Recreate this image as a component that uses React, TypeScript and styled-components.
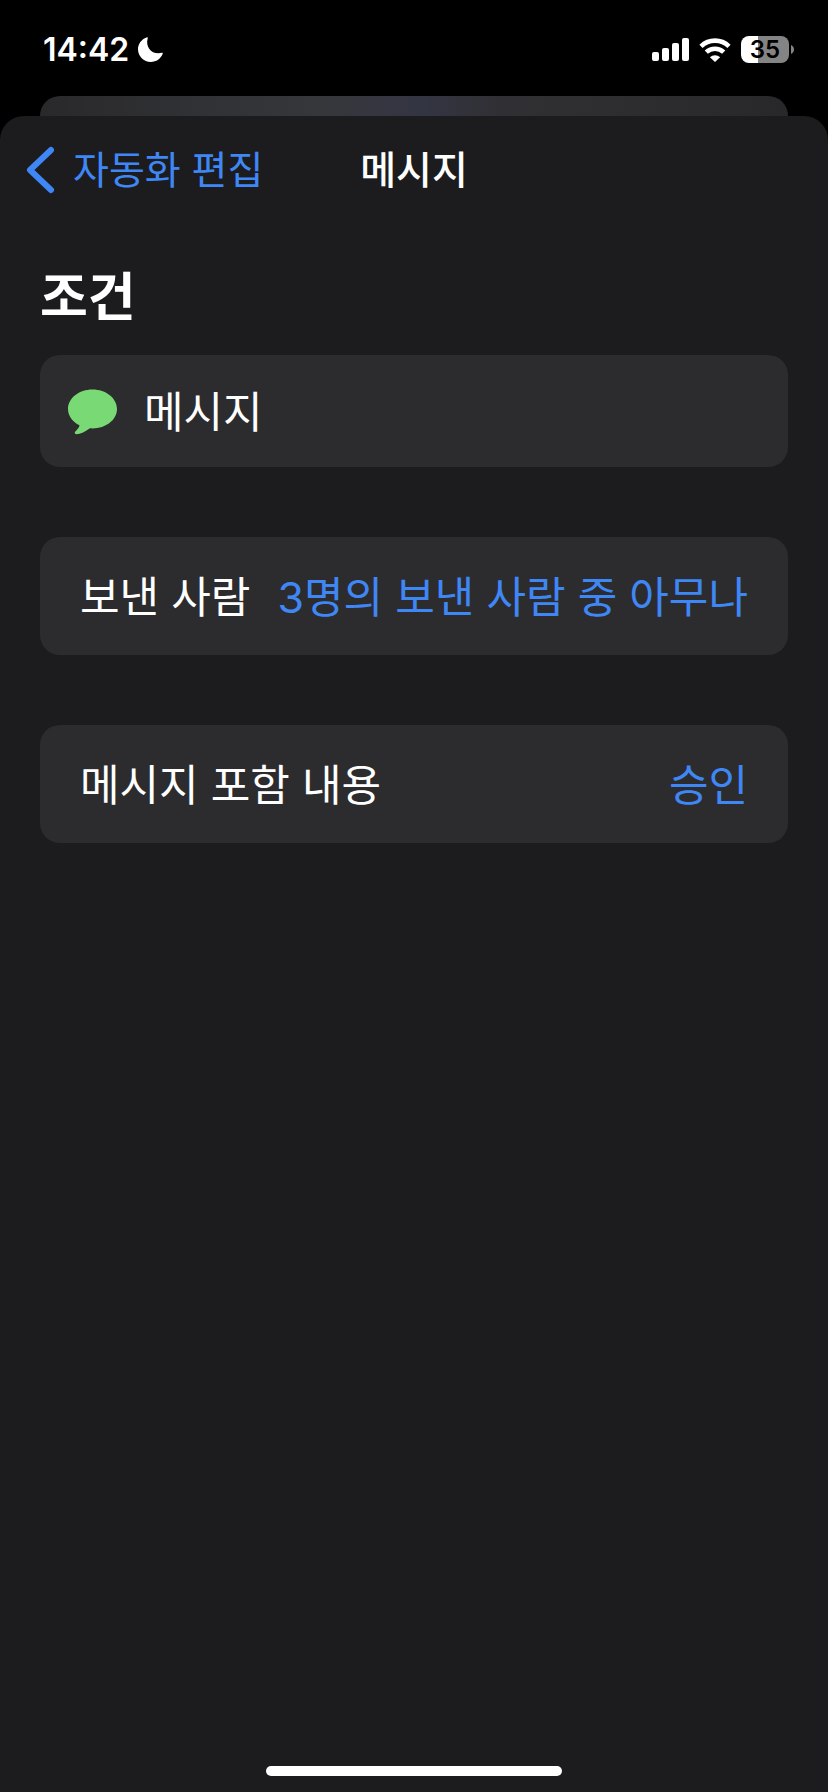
import React from "react";
import styled, { createGlobalStyle } from "styled-components";

const colors = {
  sheet: "#1c1c1e",
  card: "#2c2c2e",
  accent: "#3f87f5",
  green: "#78d975",
  gray: "#848484",
};

const GlobalStyle = createGlobalStyle`
  *, *::before, *::after { box-sizing: border-box; }
  body {
    margin: 0;
    background: #000;
    color: #fff;
    font-family: Inter, "Noto Sans CJK KR", sans-serif;
  }
  button {
    margin: 0;
    padding: 0;
    border: 0;
    background: none;
    font: inherit;
    cursor: pointer;
  }
`;

const Screen = styled.div`
  display: flex;
  flex-direction: column;
  min-height: 100vh;
`;

const StatusBar = styled.header`
  display: flex;
  align-items: center;
  justify-content: space-between;
  height: 96px;
  padding: 3px 34px 0 43px;
`;

const StatusGroup = styled.div<{ $gap: number }>`
  display: flex;
  align-items: center;
  gap: ${(p) => p.$gap}px;
`;

const Time = styled.time`
  font-size: 32px;
  font-weight: 600;
  line-height: 40px;
`;

const Battery = styled.div`
  display: flex;
  align-items: center;
  gap: 2px;
`;

const BatteryBody = styled.div<{ $level: number }>`
  width: 48px;
  border-radius: 8px;
  background: linear-gradient(
    to right,
    #fff ${(p) => p.$level}%,
    ${colors.gray} ${(p) => p.$level}%
  );
  color: #000;
  font-size: 24px;
  font-weight: 600;
  line-height: 27px;
  text-align: center;
`;

const SheetBehind = styled.div`
  height: 20px;
  margin: 0 40px;
  border-radius: 20px 20px 0 0;
  background: linear-gradient(
    to right,
    #29292b 0%,
    #303134 20%,
    #36373b 38%,
    #343543 51%,
    #302f33 62%,
    #2e2e30 75%,
    #28282a 100%
  );
`;

const Sheet = styled.main`
  display: flex;
  flex: 1;
  flex-direction: column;
  border-radius: 24px 24px 0 0;
  background: ${colors.sheet};
`;

const NavBar = styled.nav`
  display: grid;
  grid-template-columns: 1fr auto 1fr;
  align-items: center;
  height: 108px;
  padding: 0 26px;
`;

const BackButton = styled.button`
  display: flex;
  align-items: center;
  justify-self: start;
  gap: 18px;
  color: ${colors.accent};
  font-size: 39px;
  line-height: 56px;
`;

const Title = styled.h1`
  margin: 0;
  font-size: 39px;
  font-weight: 500;
  line-height: 56px;
`;

const Content = styled.section`
  display: flex;
  flex-direction: column;
  padding: 34px 40px 0;
`;

const Heading = styled.h2`
  margin: 0 0 17px;
  font-size: 52px;
  font-weight: 700;
  line-height: 80px;
`;

const Rows = styled.div`
  display: flex;
  flex-direction: column;
  gap: 70px;
`;

const Row = styled.div`
  display: flex;
  align-items: center;
  justify-content: space-between;
  min-height: 118px;
  padding: 2px 40px 0;
  border-radius: 20px;
  background: ${colors.card};
  font-size: 43px;
  line-height: 64px;
`;

const TriggerRow = styled(Row)`
  justify-content: flex-start;
  gap: 26px;
  min-height: 112px;
  padding: 2px 28px 0;
`;

const ValueButton = styled.button`
  color: ${colors.accent};
`;

const HomeIndicator = styled.div`
  width: 296px;
  height: 10px;
  margin: auto auto 16px;
  border-radius: 5px;
  background: #fff;
`;

const MoonIcon = () => (
  <svg width="25" height="25" viewBox="0 0 25 25" fill="#fff" aria-hidden="true">
    <path d="M8.6.5C9.3.1 10 .7 9.7 1.4 7.4 9 12.5 16.3 20.5 16.3c1.1 0 2.2-.2 3.1-.5.8-.3 1.4.3 1.1 1C22.9 21.7 18.3 25 12.8 25 5.7 25 0 19.3 0 12.3 0 7 3.400 2.300 8.600.5z" />
  </svg>
);

const SignalIcon = () => (
  <svg width="37" height="23" viewBox="0 0 37 23" fill="#fff" aria-hidden="true">
    <rect x="0" y="14" width="7" height="9" rx="2" />
    <rect x="10" y="10" width="7" height="13" rx="2" />
    <rect x="20" y="5" width="7" height="18" rx="2" />
    <rect x="30" y="0" width="7" height="23" rx="2" />
  </svg>
);

const WifiIcon = () => (
  <svg width="32" height="24" viewBox="0 0 32 24" fill="none" stroke="#fff" aria-hidden="true">
    <path d="M2 8.300C9.900.7 22.100.7 30 8.300" strokeWidth="4.600" />
    <path d="M7.300 14.200c4.900-4.700 12.500-4.700 17.400 0" strokeWidth="4.600" />
    <path d="M10.900 19.300c2.800-2.800 7.400-2.800 10.200 0L16 24z" fill="#fff" stroke="none" />
  </svg>
);

const BatteryTip = () => (
  <svg width="3" height="9" viewBox="0 0 3 9" fill={colors.gray} aria-hidden="true">
    <path d="M0 0c1.800.8 3 2.500 3 4.500S1.800 8.200 0 9z" />
  </svg>
);

const ChevronIcon = () => (
  <svg
    width="29"
    height="48"
    viewBox="0 0 29 48"
    fill="none"
    stroke="currentColor"
    strokeWidth="6"
    strokeLinecap="round"
    strokeLinejoin="round"
    aria-hidden="true"
  >
    <path d="M25 4 4 24l21 20" />
  </svg>
);

const MessageIcon = () => (
  <svg width="50" height="46" viewBox="0 0 50 46" fill={colors.green} aria-hidden="true">
    <path d="M24.500.5C38 .5 49 9.200 49 20S38 39.400 24.500 39.400c-.9 0-1.800 0-2.600-.1C17.500 42.500 12.500 45.200 8.300 45.200c-1.600 0-2-1.500-1-2.600 2.100-2.200 4.200-4.300 4.200-6.300C4.600 32.900 0 26.900 0 20 0 9.200 11 .5 24.500.5z" />
  </svg>
);

export default function App() {
  return (
    <Screen>
      <GlobalStyle />
      <StatusBar>
        <StatusGroup $gap={9}>
          <Time>14:42</Time>
          <MoonIcon />
        </StatusGroup>
        <StatusGroup $gap={10}>
          <SignalIcon />
          <WifiIcon />
          <Battery>
            <BatteryBody $level={35}>35</BatteryBody>
            <BatteryTip />
          </Battery>
        </StatusGroup>
      </StatusBar>
      <SheetBehind />
      <Sheet>
        <NavBar>
          <BackButton type="button">
            <ChevronIcon />
            자동화 편집
          </BackButton>
          <Title>메시지</Title>
        </NavBar>
        <Content>
          <Heading>조건</Heading>
          <Rows>
            <TriggerRow>
              <MessageIcon />
              <span>메시지</span>
            </TriggerRow>
            <Row>
              <span id="sender-label">보낸 사람</span>
              <ValueButton type="button" aria-describedby="sender-label">
                3명의 보낸 사람 중 아무나
              </ValueButton>
            </Row>
            <Row>
              <span id="contains-label">메시지 포함 내용</span>
              <ValueButton type="button" aria-describedby="contains-label">
                승인
              </ValueButton>
            </Row>
          </Rows>
        </Content>
        <HomeIndicator />
      </Sheet>
    </Screen>
  );
}
